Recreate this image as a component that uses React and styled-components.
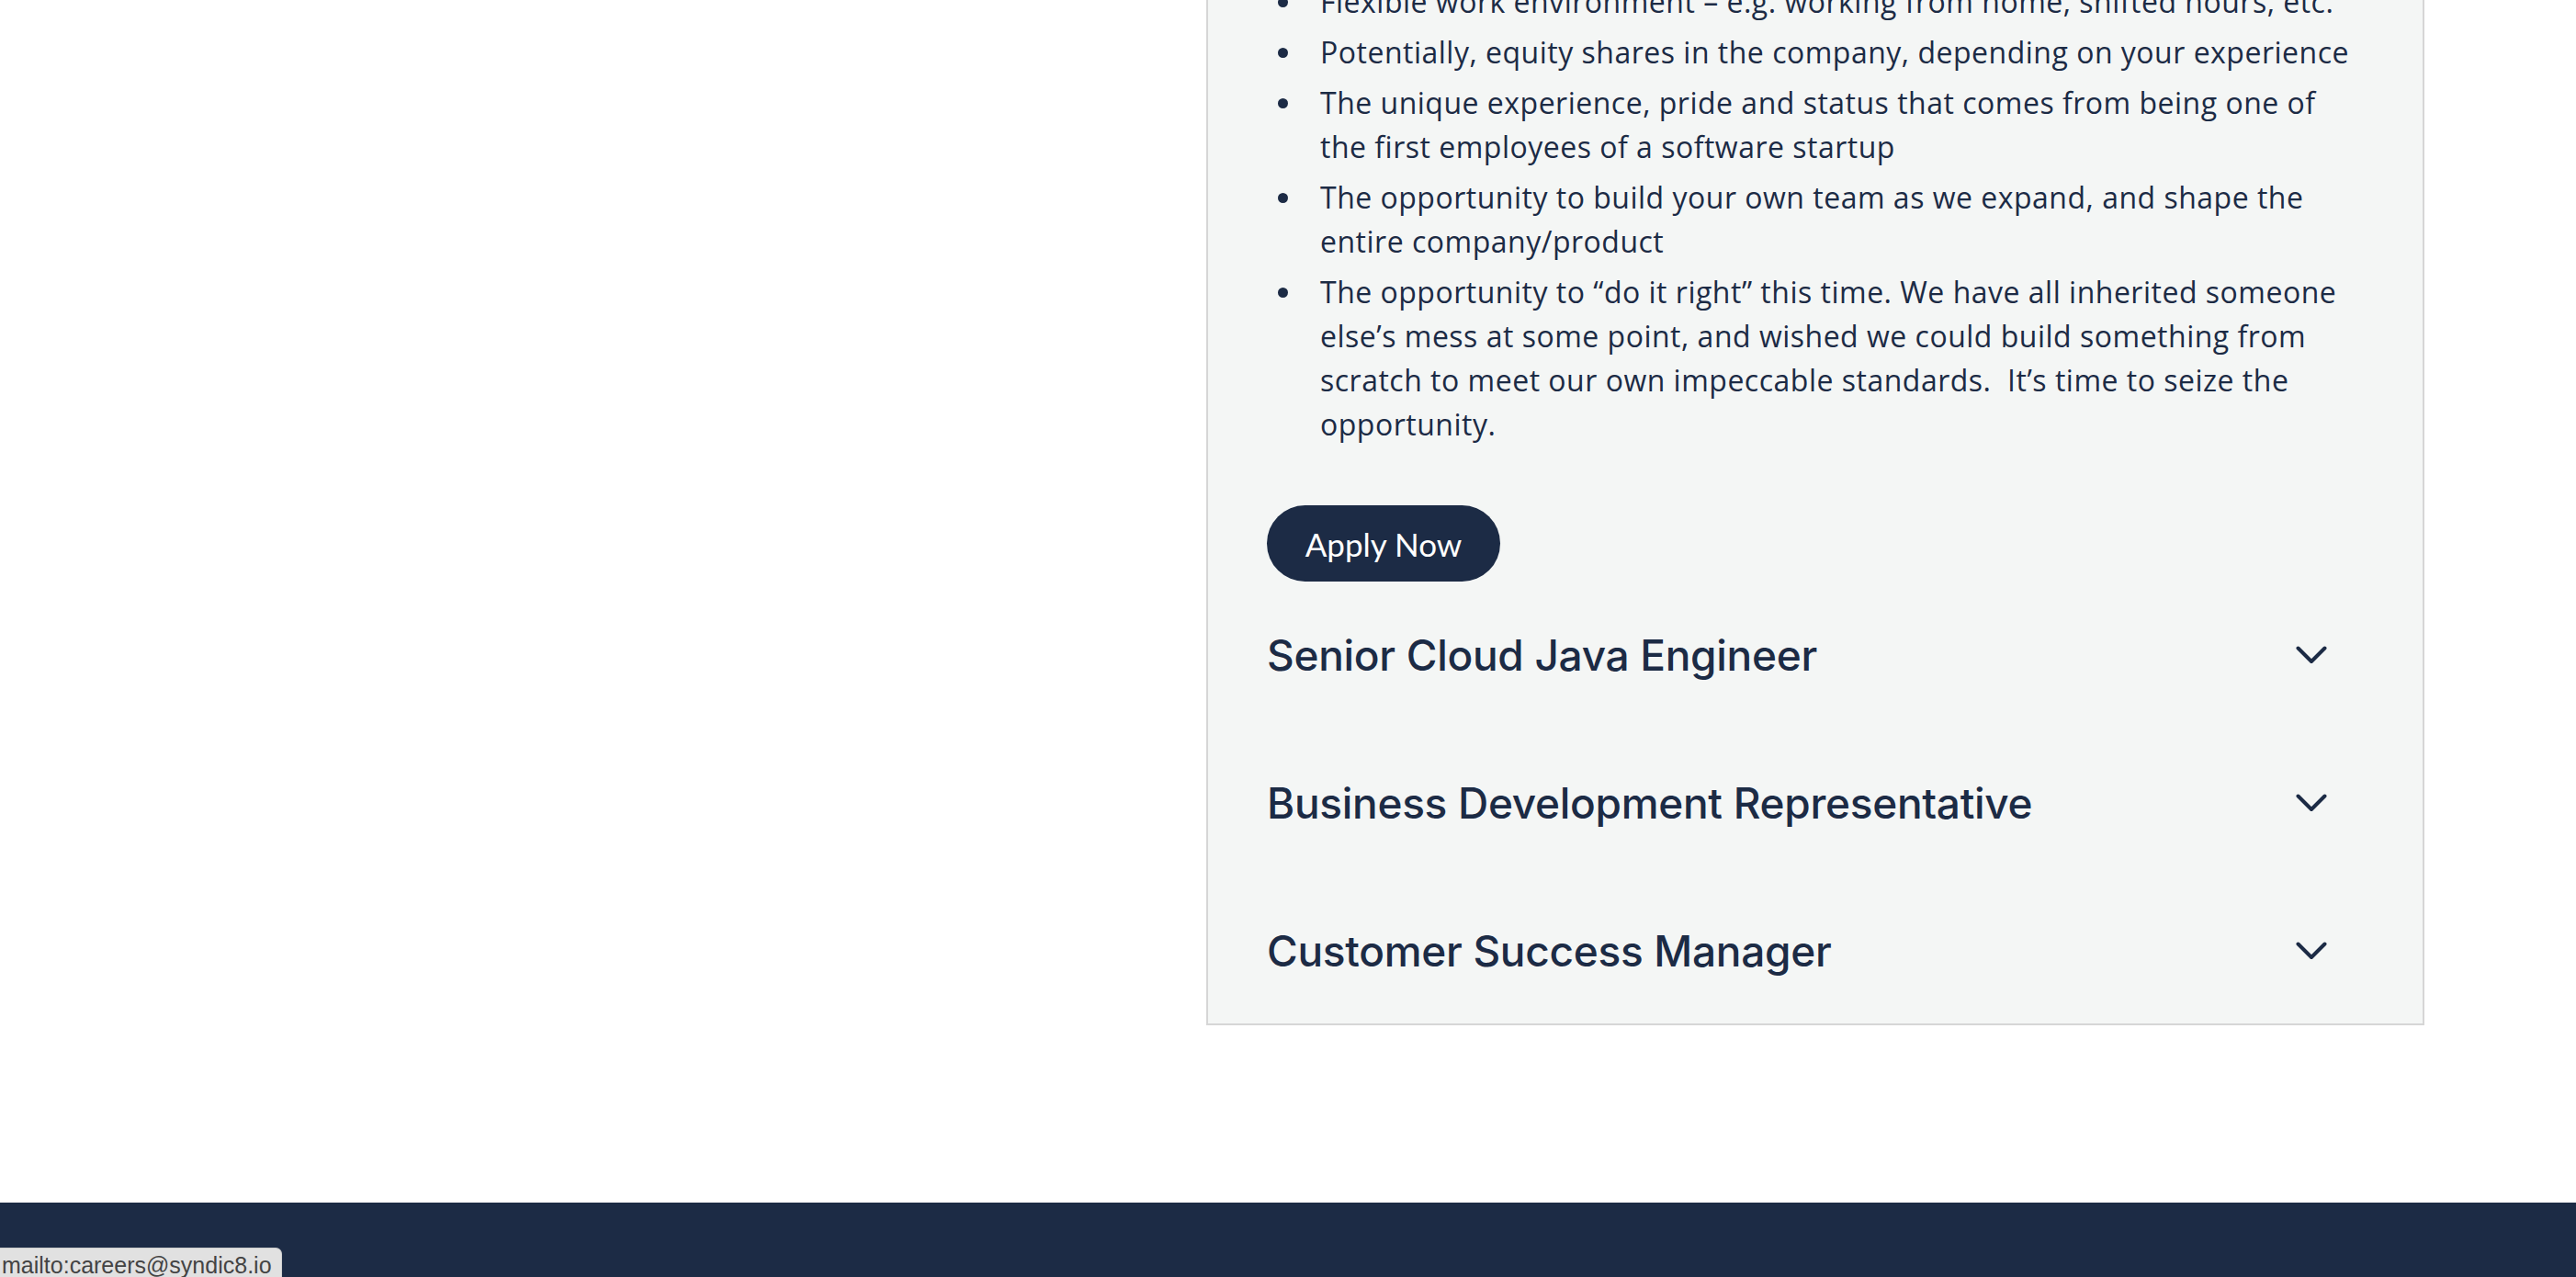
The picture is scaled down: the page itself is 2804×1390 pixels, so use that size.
import React from "react";
import styled, { createGlobalStyle } from "styled-components";

const Global = createGlobalStyle`
  html, body { margin: 0; padding: 0; background: #ffffff; }
  body { font-family: "Open Sans", "Liberation Sans", sans-serif; color: #1c2b45; overflow: hidden; }
`;

const Page = styled.div`
  width: 2804px;
  height: 1390px;
  display: flex;
  flex-direction: column;
  overflow: hidden;
`;

const Main = styled.main`
  display: grid;
  grid-template-columns: 1313px 1326px 1fr;
  margin-top: -24px;
`;

const Panel = styled.section`
  grid-column: 2;
  background: #f4f6f5;
  border: 2px solid #d6d6d6;
  padding: 0 64px 39px 64px;
`;

const Perks = styled.ul`
  margin: 0;
  padding: 0 0 0 58px;
  list-style: none;
`;

const Perk = styled.li`
  position: relative;
  font-size: 32px;
  line-height: 48px;
  margin-bottom: 7px;
  letter-spacing: 0.5px;
  padding-right: 4px;

  &::before {
    content: "";
    position: absolute;
    left: -46px;
    top: 19px;
    width: 11px;
    height: 11px;
    border-radius: 50%;
    background: #1c2b45;
  }
`;

const ApplyButton = styled.a`
  display: inline-flex;
  align-items: center;
  justify-content: center;
  width: 254px;
  height: 83px;
  margin-top: 57px;
  border-radius: 42px;
  background: #1c2b45;
  color: #ffffff;
  font-family: "Lato", "Open Sans", sans-serif;
  font-size: 35px;
  text-decoration: none;
  box-sizing: border-box;
`;

const Jobs = styled.div`
  display: flex;
  flex-direction: column;
  gap: 81px;
  margin-top: 40px;
`;

const Job = styled.div`
  display: flex;
  align-items: center;
  justify-content: space-between;
  height: 80px;
  padding-right: 40px;
`;

const JobTitle = styled.h3`
  margin: 0;
  font-family: "Inter", "Liberation Sans", sans-serif;
  font-weight: 500;
  font-size: 46px;
  letter-spacing: -0.3px;
  color: #1c2b45;
`;

const Chevron = () => (
  <svg width="34" height="20" viewBox="0 0 34 20" fill="none">
    <path d="M2.5 2.5 L17 17 L31.5 2.5" stroke="#1c2b45" strokeWidth="4" strokeLinecap="round" strokeLinejoin="round" />
  </svg>
);

const Footer = styled.footer`
  margin-top: 193px;
  flex: 1;
  background: #1c2b45;
`;

const StatusBar = styled.div`
  position: fixed;
  left: 0;
  bottom: 0;
  height: 31px;
  padding: 0 10px 0 2px;
  background: #e1e1e1;
  border-top: 1px solid #cfcfcf;
  border-right: 1px solid #cfcfcf;
  border-top-right-radius: 7px;
  font-family: "Liberation Sans", "DejaVu Sans", sans-serif;
  font-size: 25px;
  line-height: 36px;
  color: #444444;
  overflow: hidden;
`;

const perks = [
  "Flexible work environment – e.g. working from home, shifted hours, etc.",
  "Potentially, equity shares in the company, depending on your experience",
  "The unique experience, pride and status that comes from being one of the first employees of a software startup",
  "The opportunity to build your own team as we expand, and shape the entire company/product",
  "The opportunity to “do it right” this time. We have all inherited someone else’s mess at some point, and wished we could build something from scratch to meet our own impeccable standards.\u00a0 It’s time to seize the opportunity.",
];

const jobs = ["Senior Cloud Java Engineer", "Business Development Representative", "Customer Success Manager"];

export default function App() {
  return (
    <Page>
      <Global />
      <Main>
        <Panel>
          <Perks>
            {perks.map((p) => (
              <Perk key={p}>{p}</Perk>
            ))}
          </Perks>
          <ApplyButton href="mailto:careers@syndic8.io">Apply Now</ApplyButton>
          <Jobs>
            {jobs.map((j) => (
              <Job key={j}>
                <JobTitle>{j}</JobTitle>
                <Chevron />
              </Job>
            ))}
          </Jobs>
        </Panel>
      </Main>
      <Footer />
      <StatusBar>mailto:careers@syndic8.io</StatusBar>
    </Page>
  );
}
